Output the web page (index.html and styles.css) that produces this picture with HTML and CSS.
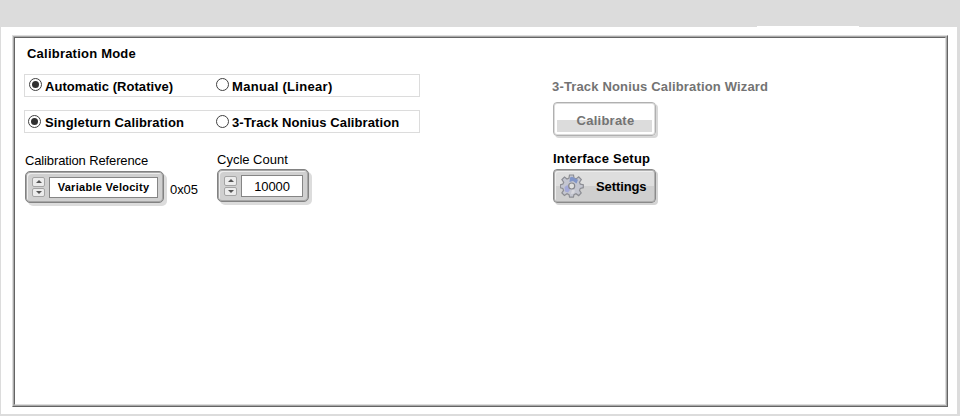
FILE: index.html
```
<!DOCTYPE html>
<html lang="en">
<head>
<meta charset="utf-8">
<title>Calibration</title>
<link rel="stylesheet" href="styles.css">
</head>
<body>
<header class="topbar"><span class="tab-edge"></span></header>
<main class="page">
  <section class="frame">
    <div class="frame-mid"><div class="frame-inner">
      <div class="left">
        <h1 class="heading">Calibration Mode</h1>
        <div class="options">
          <label class="option first"><span class="radio on"></span><span class="text t-auto">Automatic (Rotative)</span></label>
          <label class="option"><span class="radio"></span><span class="text t-manual">Manual (Linear)</span></label>
        </div>
        <div class="options second">
          <label class="option first turn"><span class="radio on"></span><span class="text t-single">Singleturn Calibration</span></label>
          <label class="option"><span class="radio"></span><span class="text t-nonius">3-Track Nonius Calibration</span></label>
        </div>
        <div class="fields">
          <div class="field reference">
            <div class="label">Calibration Reference</div>
            <div class="control">
              <div class="spinner">
                <div class="steps"><span class="step up"></span><span class="step down"></span></div>
                <div class="value small">Variable Velocity</div>
              </div>
              <span class="code">0x05</span>
            </div>
          </div>
          <div class="field count">
            <div class="label">Cycle Count</div>
            <div class="spinner">
              <div class="steps"><span class="step up"></span><span class="step down"></span></div>
              <div class="value">10000</div>
            </div>
          </div>
        </div>
      </div>
      <div class="right">
        <h2 class="wizard">3-Track Nonius Calibration Wizard</h2>
        <div class="button disabled"><span>Calibrate</span></div>
        <h2 class="setup">Interface Setup</h2>
        <div class="button settings">
          <svg class="gear" viewBox="0 0 24 24" width="24" height="24">
            <path d="M9.500 1h4l.5 3 2 .9 2.700-2 2.600 2.600-1.800 2.700.8 1.900 3 .6v3l-3 .7-.8 2 1.700 2.600-2.500 2.600-2.700-1.900-2 .9-.6 2.600h-3.800l-.6-2.600-2-.9-2.600 1.800-2.500-2.600 1.700-2.500-.8-2-2.500-.6v-3l2.600-.7.8-1.900-1.800-2.600 2.600-2.600 2.500 2 2-.9z" fill="#c4c6d0" stroke="#8c8d93" stroke-width="1.200"/>
            <path d="M10 3.500l2-.8 6 3-1.500 3.800-3.500-2.500-3.500 1z" fill="#8195c8"/>
            <path d="M4.500 13l3-2 2.500 5-2 2.500-3-1z" fill="#a3a9d8"/>
            <path d="M12 15.500l3 1-1 3-3 .5z" fill="#d8d8de"/>
            <circle cx="11.700" cy="12" r="3" fill="#e0e0e0" stroke="#85868c" stroke-width="1.200"/>
          </svg>
          <span class="caption">Settings</span>
        </div>
      </div>
    </div></div>
  </section>
</main>
</body>
</html>
```
FILE: styles.css
```
* { box-sizing: border-box; }
body { margin: 0; width: 960px; height: 416px; overflow: hidden; background: #dcdcdc; color: #000; font: 13px/16px "Liberation Sans", Arial, sans-serif; }
.topbar { height: 27px; display: flex; align-items: flex-end; }
.tab-edge { width: 102px; height: 1px; margin-left: 757px; background: #fff; }
.page { width: 956px; height: 387px; margin-left: 1px; padding: 8px 9px 7px 11px; background: #fff; }
.frame { height: 372px; border: 1px solid; border-color: #dcdcdc #646464 #646464 #dcdcdc; }
.frame-mid { height: 100%; border: 1px solid #ababab; }
.frame-inner { height: 100%; border: 1px solid; border-color: #646464 #dcdcdc #dcdcdc #646464; display: flex; }
.left { width: 538px; padding: 8px 0 0 9px; }
h1, h2 { margin: 0; font-size: 13px; line-height: 16px; font-weight: bold; }
.heading { margin-left: 3px; letter-spacing: .22px; }
.options { width: 396px; height: 23px; margin-top: 12px; border: 1px solid #dcdcdc; display: flex; font-weight: bold; }
.options.second { margin-top: 13px; }
.option { display: flex; align-items: flex-start; gap: 3px; white-space: nowrap; }
.option.first { width: 191px; padding-left: 4px; }
.option.turn { padding-left: 3px; gap: 4px; }
.radio { width: 13px; height: 13px; border: 1px solid #404040; border-radius: 50%; margin-top: 3px; display: flex; align-items: center; justify-content: center; flex: none; }
.second .radio { margin-top: 4px; }
.on::after { content: ""; width: 7px; height: 7px; border-radius: 50%; background: #303030; }
.text { margin-top: 4px; }
.t-auto { letter-spacing: .05px; }
.t-manual { letter-spacing: .3px; }
.t-single { letter-spacing: .15px; }
.t-nonius { letter-spacing: .1px; }
.fields { display: flex; margin: 18px 0 0 1px; }
.reference { width: 192px; }
.label { height: 18px; padding-top: 1px; white-space: nowrap; }
.reference .label { height: 20px; padding-top: 2px; letter-spacing: -.13px; }
.control { display: flex; }
.spinner { width: 139px; height: 32px; padding: 5px 5px 5px 6px; border: 1px solid #828282; border-radius: 5px; background: #d0d0d0; box-shadow: 3px 3px 0 #dcdcdc, inset 0 0 0 1px #a6a6a6, inset 2px 2px 0 #eee; display: flex; gap: 4px; }
.count .spinner { width: 92px; height: 33px; }
.steps { display: flex; flex-direction: column; gap: 1px; }
.count .steps { padding-top: 1px; }
.step { width: 13px; height: 10px; border: 1px solid #a4a4a4; border-radius: 2px; background: #ececec; display: flex; align-items: center; justify-content: center; }
.step::after { content: ""; border: 3px solid transparent; }
.up::after { border-top: 0; border-bottom-color: #555; }
.down::after { border-bottom: 0; border-top-color: #555; }
.value { flex: 1; height: 21px; border: 1px solid #858585; background: #fff; line-height: 19px; text-align: center; white-space: nowrap; }
.count .value { height: 22px; line-height: 22px; letter-spacing: -.1px; }
.value.small { font-size: 11px; font-weight: bold; letter-spacing: .28px; }
.code { margin: 11px 0 0 6px; letter-spacing: -.1px; }
.right { padding-top: 41px; }
.wizard { color: #737373; letter-spacing: .16px; margin-left: -1px; }
.button { width: 103px; height: 34px; border: 1px solid; border-radius: 4px; font-weight: bold; display: flex; align-items: center; }
.disabled { margin-top: 7px; padding: 3px; border-color: #b0b0b0; box-shadow: 2px 2px 0 #d8d8d8, inset 0 0 0 1px #dcdcdc; color: #737373; letter-spacing: .25px; }
.disabled span { flex: 1; height: 26px; line-height: 29px; padding-left: 2px; text-align: center; background: linear-gradient(#fff 14px, #dcdcdc 14px); }
.setup { margin-top: 15px; letter-spacing: .22px; }
.settings { margin-top: 2px; padding-left: 6px; gap: 12px; border-color: #8a8a8a; background: linear-gradient(#dedede 50%, #cfcfcf 50%); box-shadow: 2px 2px 0 #d4d4d4, inset 0 0 0 1px #b0b0b0, inset 2px 2px 0 #eee; letter-spacing: -.1px; }
.gear { flex: none; }
.caption { margin-top: 2px; }
```
